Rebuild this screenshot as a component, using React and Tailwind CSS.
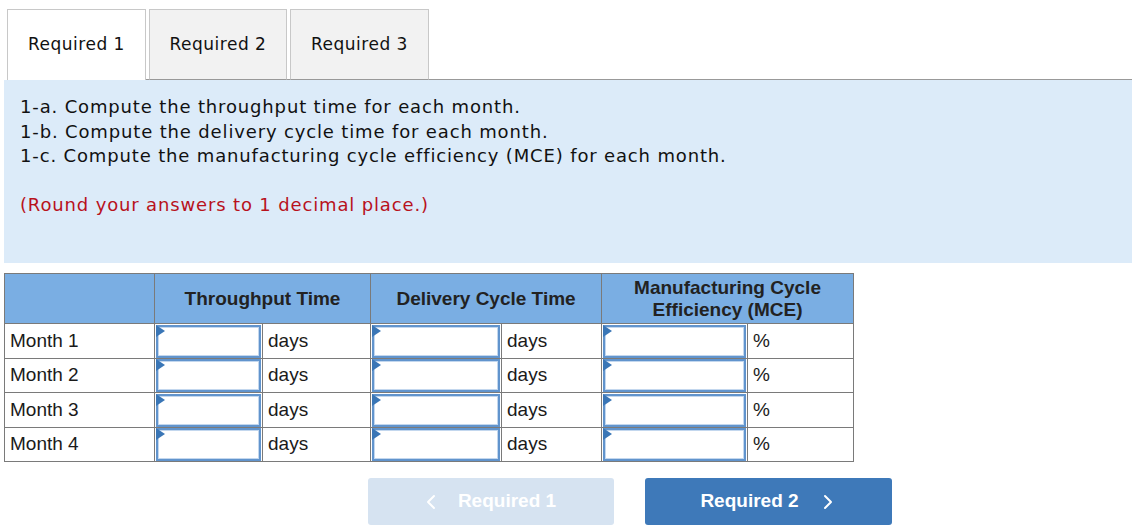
const rows = ["Month 1", "Month 2", "Month 3", "Month 4"];

function AnswerBox() {
  return (
    <div className="relative h-[33px] mx-[1px] border-2 border-[#6194cd] bg-white">
      <div className="absolute inset-0 border border-[#c3d7ee]" />
      <svg className="absolute -top-[2px] -left-[2px]" width="9" height="12" viewBox="0 0 9 12">
        <polygon points="0,0 9,6 0,12" fill="#3a76b6" />
      </svg>
    </div>
  );
}

function Chevron({ dir }) {
  return (
    <svg width="10" height="16" viewBox="0 0 10 16" fill="none">
      <polyline
        points={dir === "left" ? "8,2 2,8 8,14" : "2,2 8,8 2,14"}
        stroke="currentColor"
        strokeWidth="2"
        strokeLinecap="round"
        strokeLinejoin="round"
      />
    </svg>
  );
}

export default function App() {
  const verdana = { fontFamily: '"DejaVu Sans", Verdana, sans-serif' };
  const arial = { fontFamily: '"Liberation Sans", Arial, sans-serif' };

  return (
    <div className="w-[1132px] h-[532px] bg-white overflow-hidden">
      {/* tabs */}
      <div className="flex items-end pt-[9px] text-[17px] tracking-[0.5px] text-[#111]" style={verdana}>
        <div className="w-[7px] h-[71px]" />
        <div className="w-[139px] h-[71px] border-x border-t border-[#c8c8c8] bg-white flex items-center justify-center">
          Required 1
        </div>
        <div className="w-[3px] h-[71px] border-b border-[#999]" />
        <div className="w-[138px] h-[71px] border border-[#c8c8c8] border-b-[#999] bg-[#f2f2f2] flex items-center justify-center">
          Required 2
        </div>
        <div className="w-[3px] h-[71px] border-b border-[#999]" />
        <div className="w-[139px] h-[71px] border border-[#c8c8c8] border-b-[#999] bg-[#f2f2f2] flex items-center justify-center">
          Required 3
        </div>
        <div className="flex-1 h-[71px] border-b border-[#999]" />
      </div>

      {/* instructions */}
      <div
        className="ml-[4px] h-[183px] bg-[#dcebf9] pl-[16px] pt-[15px] text-[18px] leading-[24.5px] tracking-[0.85px] text-[#111]"
        style={verdana}
      >
        <p>1-a. Compute the throughput time for each month.</p>
        <p>1-b. Compute the delivery cycle time for each month.</p>
        <p>1-c. Compute the manufacturing cycle efficiency (MCE) for each month.</p>
        <p className="mt-[24px] text-[#b8121c]">(Round your answers to 1 decimal place.)</p>
      </div>

      {/* table */}
      <table
        className="ml-[4px] mt-[10px] border-collapse table-fixed w-[849px] text-[19px] text-[#1a1a1a]"
        style={arial}
      >
        <colgroup>
          <col className="w-[150px]" />
          <col className="w-[108px]" />
          <col className="w-[108px]" />
          <col className="w-[131px]" />
          <col className="w-[100px]" />
          <col className="w-[146px]" />
          <col className="w-[106px]" />
        </colgroup>
        <thead>
          <tr className="h-[50px] bg-[#7aaee3]">
            <th className="border border-[#7a7a7a]" />
            <th colSpan={2} className="border border-[#7a7a7a] font-bold text-[#222] leading-[22px]">
              Throughput Time
            </th>
            <th colSpan={2} className="border border-[#7a7a7a] font-bold text-[#222] leading-[22px]">
              Delivery Cycle Time
            </th>
            <th colSpan={2} className="border border-[#7a7a7a] font-bold text-[#222] leading-[22px]">
              Manufacturing Cycle
              <br />
              Efficiency (MCE)
            </th>
          </tr>
        </thead>
        <tbody>
          {rows.map((m, i) => (
            <tr key={m} className={i % 2 === 0 ? "h-[35px]" : "h-[34px]"}>
              <td className="border border-[#7a7a7a] pl-[5px]">{m}</td>
              <td className="border border-[#7a7a7a] p-0">
                <AnswerBox />
              </td>
              <td className="border border-[#7a7a7a] pl-[5px]">days</td>
              <td className="border border-[#7a7a7a] p-0">
                <AnswerBox />
              </td>
              <td className="border border-[#7a7a7a] pl-[5px]">days</td>
              <td className="border border-[#7a7a7a] p-0">
                <AnswerBox />
              </td>
              <td className="border border-[#7a7a7a] pl-[5px]">%</td>
            </tr>
          ))}
        </tbody>
      </table>

      {/* nav buttons */}
      <div className="flex ml-[368px] mt-[16px] gap-[31px] text-[19px] font-bold" style={arial}>
        <button className="w-[246px] h-[47px] rounded-[3px] bg-[#d6e3f1] text-white flex items-center justify-center gap-[22px]">
          <Chevron dir="left" />
          <span>Required 1</span>
        </button>
        <button className="w-[247px] h-[47px] rounded-[3px] bg-[#3e79b9] text-white flex items-center justify-center gap-[24px] pr-[4px]">
          <span>Required 2</span>
          <Chevron dir="right" />
        </button>
      </div>
    </div>
  );
}
